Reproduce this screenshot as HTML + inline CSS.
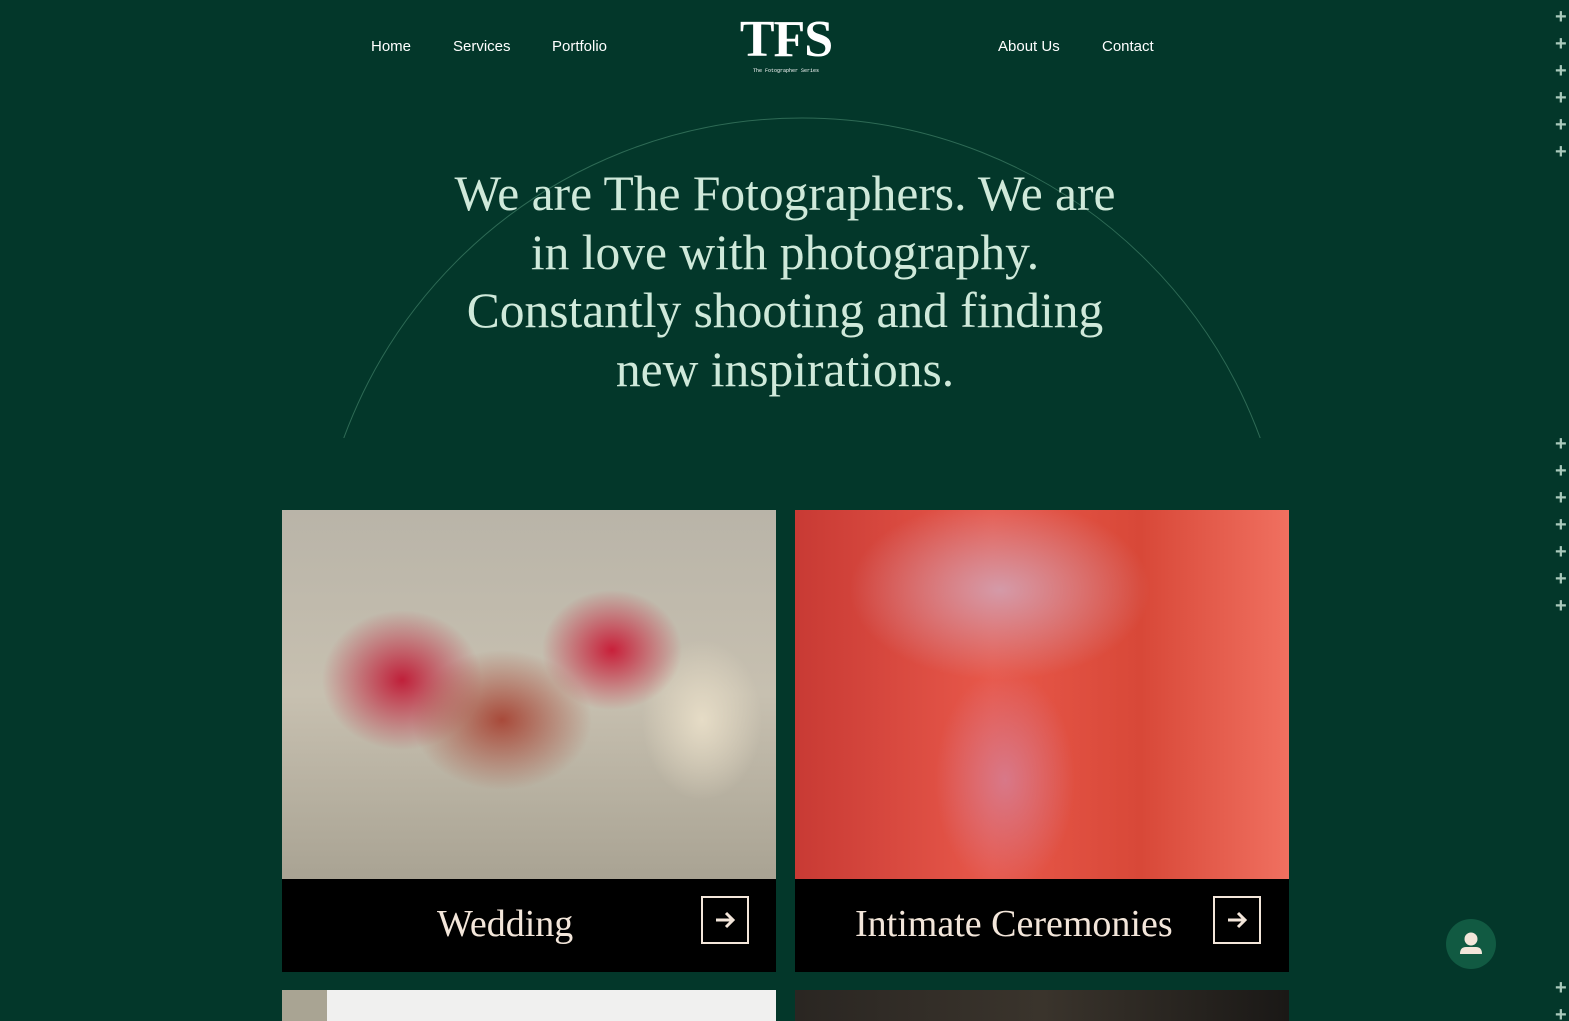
<!DOCTYPE html>
<html style="overflow:hidden"><head><meta charset="utf-8"><style>
html,body{margin:0;width:1569px;height:1021px;overflow:hidden}
body{background:#03372a;font-family:"Liberation Sans",sans-serif;position:relative}
.nav{position:absolute;top:38px;color:#fff;font-size:15px}
.logo{position:absolute;left:736px;top:14px;width:100px;text-align:center;color:#fff}
h1{position:absolute;left:370px;width:830px;top:165px;margin:0;text-align:center;font-family:"Liberation Serif",serif;font-weight:normal;font-size:49.5px;line-height:58.5px;color:#cfe9da}
.card{position:absolute;width:494px;height:462px;top:510px;background:#000}
.img{position:absolute;left:0;top:0;width:494px;height:369px}
.cap{position:absolute;top:369px;left:0;width:494px;height:93px;color:#f3e6da;font-family:"Liberation Serif",serif;font-size:38px;line-height:90px}
.btn{position:absolute;top:17px;width:44px;height:44px;border:2px solid #f3e6da;line-height:0}
.btn svg{display:block}
.plus{position:absolute;left:1555px;color:#a9c9bb;font-size:20px;font-weight:bold;line-height:27px}
</style></head><body>
<svg style="position:absolute;left:0;top:0" width="1569" height="1021"><circle cx="802" cy="606" r="488" fill="none" stroke="#2e6a55" stroke-width="1"/><rect x="300" y="438" width="1000" height="583" fill="#03372a"/></svg>
<div class="nav" style="left:371px">Home</div>
<div class="nav" style="left:453px">Services</div>
<div class="nav" style="left:552px">Portfolio</div>
<div class="nav" style="left:998px">About Us</div>
<div class="nav" style="left:1102px">Contact</div>
<div class="logo"><div style="font-family:'Liberation Serif',serif;font-size:52px;font-weight:bold;line-height:52px;letter-spacing:-1px">TFS</div><div style="font-family:'Liberation Mono',monospace;font-size:5px;margin-top:2px">The Fotographer Series</div></div>
<h1>We are The Fotographers. We are<br>in love with photography.<br>Constantly shooting and finding<br>new inspirations.</h1>
<div class="card" style="left:282px"><div class="img" style="background:radial-gradient(ellipse 90px 70px at 220px 210px,#a84a3a,transparent),radial-gradient(ellipse 80px 70px at 120px 170px,#c0203a,transparent),radial-gradient(ellipse 70px 60px at 330px 140px,#c8203a,transparent),radial-gradient(ellipse 60px 80px at 420px 210px,#e6dcc6,transparent),linear-gradient(#b9b4a8,#c7c0b0 50%,#a9a393)"></div><div class="cap"><span style="position:absolute;left:155px">Wedding</span><div class="btn" style="left:419px"><svg width="44" height="44"><path d="M13 22h17M23 15l7 7-7 7" stroke="#f3e6da" stroke-width="3" fill="none"/></svg></div></div></div>
<div class="card" style="left:795px"><div class="img" style="background:radial-gradient(ellipse 150px 90px at 205px 80px,#d49aa8,transparent),radial-gradient(ellipse 70px 110px at 210px 270px,#d87888,transparent),linear-gradient(90deg,#c83a34,#e8584a 40%,#d84838 70%,#f07060)"></div><div class="cap"><span style="position:absolute;left:60px">Intimate Ceremonies</span><div class="btn" style="left:418px"><svg width="44" height="44"><path d="M13 22h17M23 15l7 7-7 7" stroke="#f3e6da" stroke-width="3" fill="none"/></svg></div></div></div>
<div style="position:absolute;left:282px;top:990px;width:494px;height:31px;background:#f0f0ef"><div style="width:45px;height:31px;background:#a9a493"></div></div>
<div style="position:absolute;left:795px;top:990px;width:494px;height:31px;background:linear-gradient(90deg,#2a2622,#3a342c 50%,#1a1816)"></div>
<div style="position:absolute;left:1446px;top:919px;width:50px;height:50px;border-radius:50%;background:#115a42"><svg width="50" height="50"><circle cx="25" cy="20" r="6.5" fill="#f3e6da"/><path d="M14 35q0-7 6-7h10q6 0 6 7z" fill="#f3e6da"/></svg></div>
<div class="plus" style="top:4px">+<br>+<br>+<br>+<br>+<br>+</div>
<div class="plus" style="top:431px">+<br>+<br>+<br>+<br>+<br>+<br>+</div>
<div class="plus" style="top:975px">+<br>+</div>
</body></html>
